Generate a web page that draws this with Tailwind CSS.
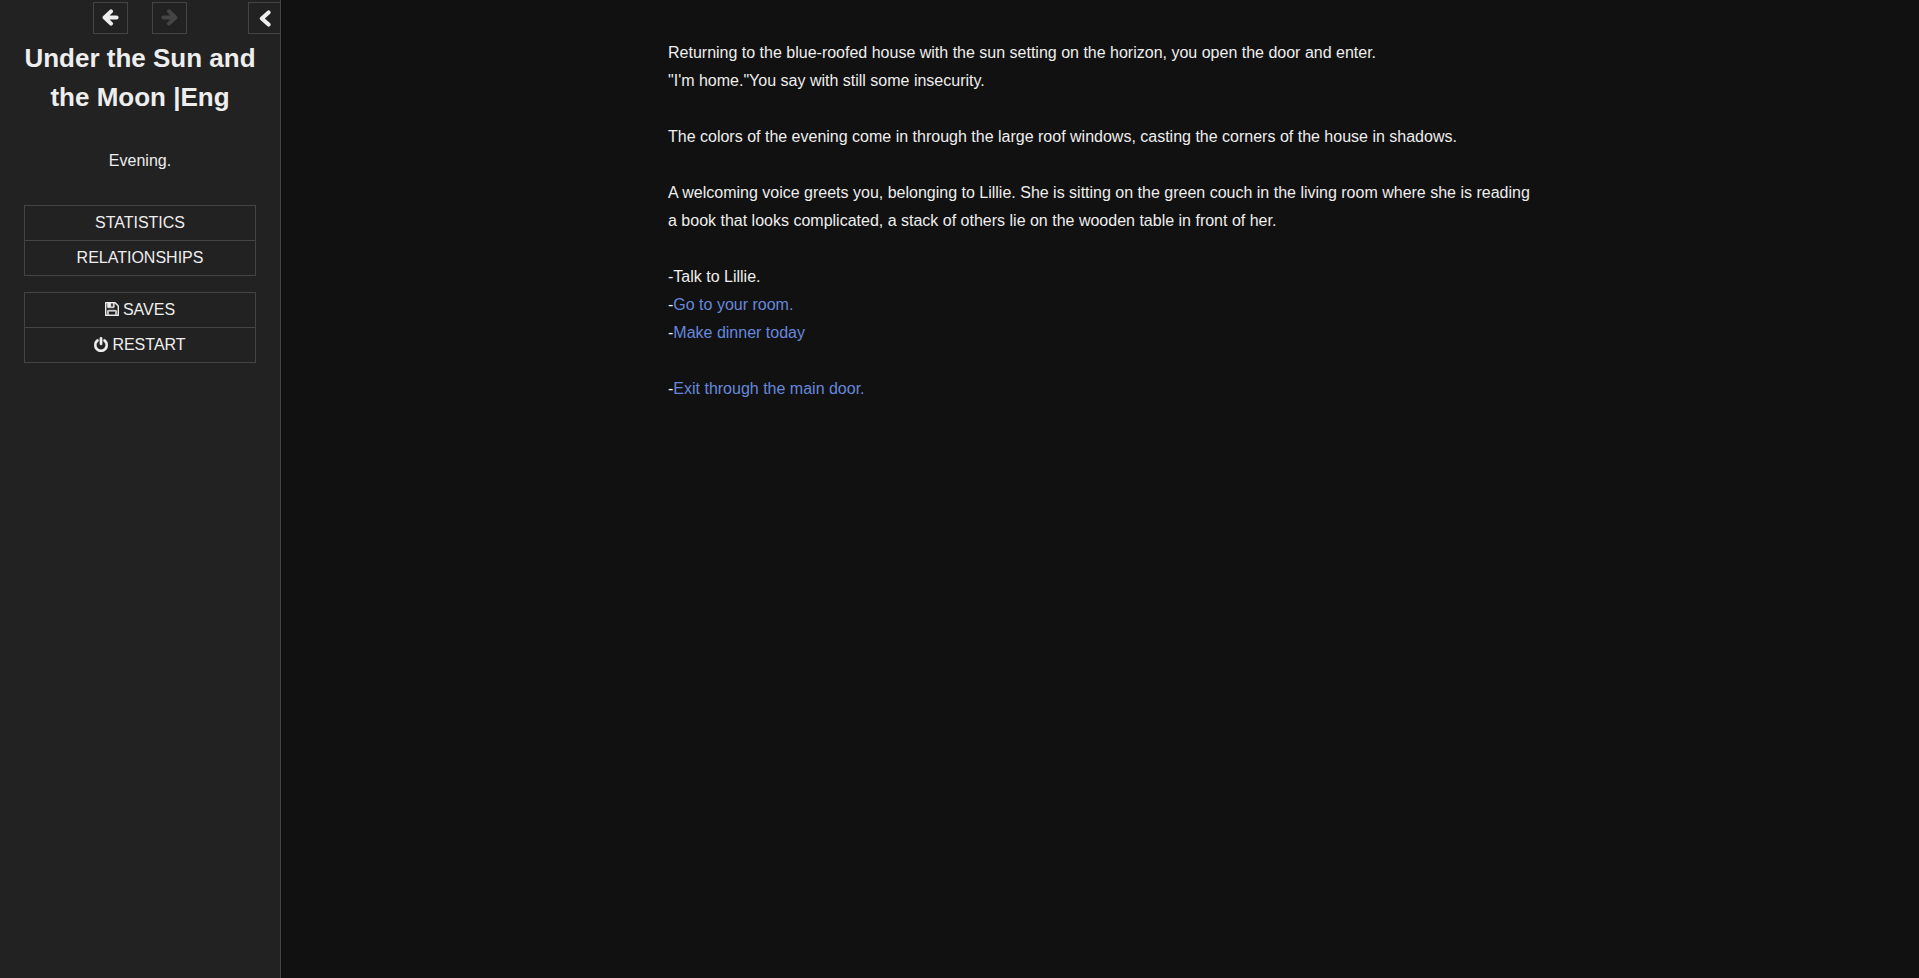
<!DOCTYPE html>
<html lang="en">
<head>
    <meta charset="UTF-8">
    <meta name="viewport" content="width=device-width, initial-scale=1.0">
    <title>Under the Sun and the Moon |Eng</title>
    <script src="https://cdn.jsdelivr.net/npm/@tailwindcss/browser@4"></script>
</head>
<body class="min-h-screen flex bg-[#111] text-[#eee] text-base font-['Liberation_Sans',Arial,sans-serif]">
    <aside class="w-[281px] shrink-0 bg-[#222] border-r border-[#444] text-center">
        <div class="grid grid-cols-[1fr_auto_1fr] pt-0.5">
            <div class="col-start-2 flex gap-6">
                <button type="button" aria-label="Go back" class="w-[35px] h-8 pb-0.5 border border-[#444] flex items-center justify-center">
                    <svg class="size-[17px]" viewBox="0 0 17 17" fill="none" stroke="currentColor" stroke-width="4" stroke-linecap="round" stroke-linejoin="round"><path d="M9 2.4 2.6 8.5 9 14.6M3 8.5h11.6"/></svg>
                </button>
                <button type="button" aria-label="Go forward" disabled class="w-[35px] h-8 pb-0.5 border border-[#444] text-[#444] flex items-center justify-center">
                    <svg class="size-[17px]" viewBox="0 0 17 17" fill="none" stroke="currentColor" stroke-width="4" stroke-linecap="round" stroke-linejoin="round"><path d="M8 2.4l6.4 6.1L8 14.6M14 8.5H2.4"/></svg>
                </button>
            </div>
            <button type="button" aria-label="Toggle sidebar" class="justify-self-end w-8 h-8 border border-r-0 border-[#444] flex items-center justify-center">
                <svg class="size-[17px]" viewBox="0 0 17 17" fill="none" stroke="currentColor" stroke-width="4" stroke-linecap="round" stroke-linejoin="round"><path d="M12.6 2.4 5.8 8.5l6.8 6.1"/></svg>
            </button>
        </div>
        <div class="px-6 pt-[5px]">
            <h1 class="text-[26px] leading-[39px] font-bold">Under the Sun and the Moon |Eng</h1>
            <p class="mt-[30px] leading-7">Evening.</p>
            <nav class="mt-[30px]">
                <ul class="border border-[#444] divide-y divide-[#444] uppercase">
                    <li><a href="#" class="block h-[34px] leading-[34px]">Statistics</a></li>
                    <li><a href="#" class="block h-[34px] leading-[34px]">Relationships</a></li>
                </ul>
                <ul class="mt-4 border border-[#444] divide-y divide-[#444] uppercase">
                    <li>
                        <a href="#" class="flex items-center justify-center gap-1 h-[34px]">
                            <svg class="w-3.5 h-4 pb-0.5" viewBox="0 128 1536 1536" fill="currentColor" stroke="currentColor" stroke-width="50"><path d="M384 1536h768v-384h-768v384zM1280 1536h128v-896q0-14-10-38.5t-20-34.5l-281-281q-10-10-34-20t-39-10v416q0 40-28 68t-68 28h-576q-40 0-68-28t-28-68v-416h-128v1280h128v-416q0-40 28-68t68-28h832q40 0 68 28t28 68v416zM896 608v-320q0-13-9.5-22.5t-22.5-9.5h-192q-13 0-22.5 9.5t-9.5 22.5v320q0 13 9.5 22.5t22.5 9.5h192q13 0 22.5-9.5t9.5-22.5zM1536 640v928q0 40-28 68t-68 28h-1344q-40 0-68-28t-28-68v-1344q0-40 28-68t68-28h928q40 0 88 20t76 48l280 280q28 28 48 76t20 88z"/></svg>
                            Saves
                        </a>
                    </li>
                    <li>
                        <a href="#" class="flex items-center justify-center gap-1 h-[34px]">
                            <svg class="w-3.5 h-[17px] pb-0.5" viewBox="0 0 1536 1664" fill="currentColor" stroke="currentColor" stroke-width="50"><path d="M1536 896q0 156-61 298t-164 245-245 164-298 61-298-61-245-164-164-245-61-298q0-182 80.5-343t226.5-270q43-32 95.5-25t83.5 50q32 42 24.5 94.5t-49.5 84.5q-98 74-151.5 181t-53.5 228q0 104 40.5 198.5t109.5 163.5 163.5 109.5 198.5 40.5 198.5-40.5 163.5-109.5 109.5-163.5 40.5-198.5q0-121-53.5-228t-151.5-181q-42-32-49.5-84.5t24.5-94.5q31-43 84-50t95 25q146 109 226.5 270t80.5 343zM896 128v640q0 52-38 90t-90 38-90-38-38-90v-640q0-52 38-90t90-38 90 38 38 90z"/></svg>
                            Restart
                        </a>
                    </li>
                </ul>
            </nav>
        </div>
    </aside>
    <main class="flex-1 px-10 pt-[39px] pb-10">
        <article class="max-w-[864px] mx-auto leading-7">
            <p>Returning to the blue-roofed house with the sun setting on the horizon, you open the door and enter.<br>"I'm home."You say with still some insecurity.</p>
            <p class="mt-7">The colors of the evening come in through the large roof windows, casting the corners of the house in shadows.</p>
            <p class="mt-7">A welcoming voice greets you, belonging to Lillie. She is sitting on the green couch in the living room where she is reading a book that looks complicated, a stack of others lie on the wooden table in front of her.</p>
            <ul class="mt-7">
                <li>-Talk to Lillie.</li>
                <li>-<a href="#" class="text-[#68d] hover:underline">Go to your room.</a></li>
                <li>-<a href="#" class="text-[#68d] hover:underline">Make dinner today</a></li>
                <li class="mt-7">-<a href="#" class="text-[#68d] hover:underline">Exit through the main door.</a></li>
            </ul>
        </article>
    </main>
</body>
</html>
